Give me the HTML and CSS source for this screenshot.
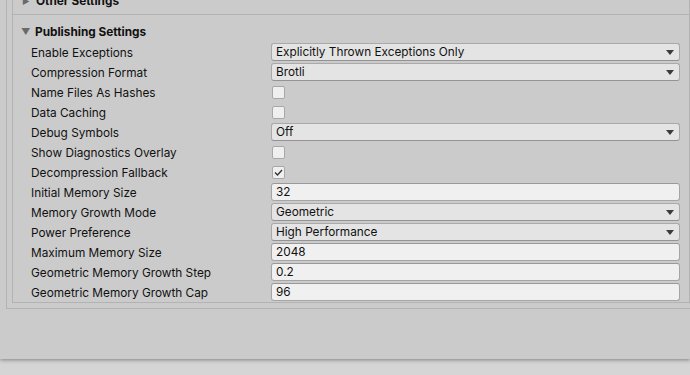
FILE: index.html
```html
<!DOCTYPE html>
<html lang="en">
<head>
    <meta charset="UTF-8">
    <meta name="viewport" content="width=device-width, initial-scale=1.0">
    <title>Publishing Settings</title>
    <link rel="stylesheet" href="styles.css">
</head>
<body>
    <div class="inspector">
        <div class="outer">
            <div class="inner">
                <div class="foldout other">
                    <span class="arrow">&#9654;</span>Other Settings
                </div>
                <div class="foldout open">
                    <span class="arrow">&#9660;</span>Publishing Settings
                </div>
                <div class="props">
                    <div class="row">
                        <label>Enable Exceptions</label>
                        <div class="popup">Explicitly Thrown Exceptions Only</div>
                    </div>
                    <div class="row">
                        <label>Compression Format</label>
                        <div class="popup">Brotli</div>
                    </div>
                    <div class="row">
                        <label>Name Files As Hashes</label>
                        <div class="toggle"></div>
                    </div>
                    <div class="row">
                        <label>Data Caching</label>
                        <div class="toggle"></div>
                    </div>
                    <div class="row">
                        <label>Debug Symbols</label>
                        <div class="popup">Off</div>
                    </div>
                    <div class="row">
                        <label>Show Diagnostics Overlay</label>
                        <div class="toggle"></div>
                    </div>
                    <div class="row">
                        <label>Decompression Fallback</label>
                        <div class="toggle">
                            <svg width="11" height="11" viewBox="0 0 11 11"><polyline points="2,5.5 4.5,8 9,3" fill="none" stroke="#333" stroke-width="1.4"/></svg>
                        </div>
                    </div>
                    <div class="row">
                        <label>Initial Memory Size</label>
                        <div class="textfield">32</div>
                    </div>
                    <div class="row">
                        <label>Memory Growth Mode</label>
                        <div class="popup">Geometric</div>
                    </div>
                    <div class="row">
                        <label>Power Preference</label>
                        <div class="popup">High Performance</div>
                    </div>
                    <div class="row">
                        <label>Maximum Memory Size</label>
                        <div class="textfield">2048</div>
                    </div>
                    <div class="row">
                        <label>Geometric Memory Growth Step</label>
                        <div class="textfield">0.2</div>
                    </div>
                    <div class="row">
                        <label>Geometric Memory Growth Cap</label>
                        <div class="textfield">96</div>
                    </div>
                </div>
            </div>
        </div>
    </div>
    <div class="statusbar"></div>
</body>
</html>
```

FILE: styles.css
```css
body {
    margin: 0;
    width: 690px;
    height: 375px;
    overflow: hidden;
    background: #d5d5d5;
    font-family: Inter, "Noto Sans", sans-serif;
    font-size: 11.8px;
    color: #111;
}
.inspector {
    height: 359px;
    background: #cbcbcb;
    overflow: hidden;
    box-shadow: 0 1px 4px rgba(0,0,0,0.4);
    position: relative;
}
.outer {
    margin-left: 6px;
    width: 678px;
    border: 1px solid #b3b3b3;
    border-top: none;
    padding: 0 1px 5px 5px;
}
.inner {
    border: 1px solid #b3b3b3;
    border-top: none;
}
.foldout {
    height: 20px;
    line-height: 20px;
    font-weight: 700;
    display: flex;
    align-items: center;
}
.foldout .arrow {
    width: 9px;
    margin-left: 8px;
    margin-right: 5px;
    font-size: 9px;
    color: #6a6a6a;
}
.foldout.other {
    margin-top: -9px;
    padding-bottom: 3px;
    border-bottom: 1px solid #b3b3b3;
}
.foldout.other .arrow {
    margin-left: 9px;
    font-size: 8px;
}
.foldout.open {
    padding-top: 7px;
}
.props {
    display: grid;
    grid-auto-rows: 20px;
}
.row {
    display: grid;
    grid-template-columns: 240px 409px;
    padding-left: 18px;
    align-items: center;
}
.row label {
    white-space: nowrap;
    padding-top: 2px;
}
.popup, .textfield {
    box-sizing: border-box;
    height: 18px;
    line-height: 17px;
    padding-left: 4px;
    border-radius: 3px;
    align-self: start;
    margin-top: 1px;
}
.popup {
    position: relative;
    background: #e4e4e4;
    border: 1px solid #a9a9a9;
    border-bottom-color: #939393;
}
.popup::after {
    content: "";
    position: absolute;
    right: 5px;
    top: 6px;
    border-left: 4px solid transparent;
    border-right: 4px solid transparent;
    border-top: 5px solid #3c3c3c;
}
.textfield {
    background: #f0f0f0;
    border: 1px solid #a5a5a5;
    border-top-color: #999;
}
.toggle {
    box-sizing: border-box;
    width: 13px;
    height: 13px;
    margin-left: 1px;
    margin-top: 1px;
    background: #efefef;
    border: 1px solid #a8a8a8;
    border-radius: 2px;
    display: flex;
    align-items: center;
    justify-content: center;
}
.statusbar {
    height: 16px;
}
```
